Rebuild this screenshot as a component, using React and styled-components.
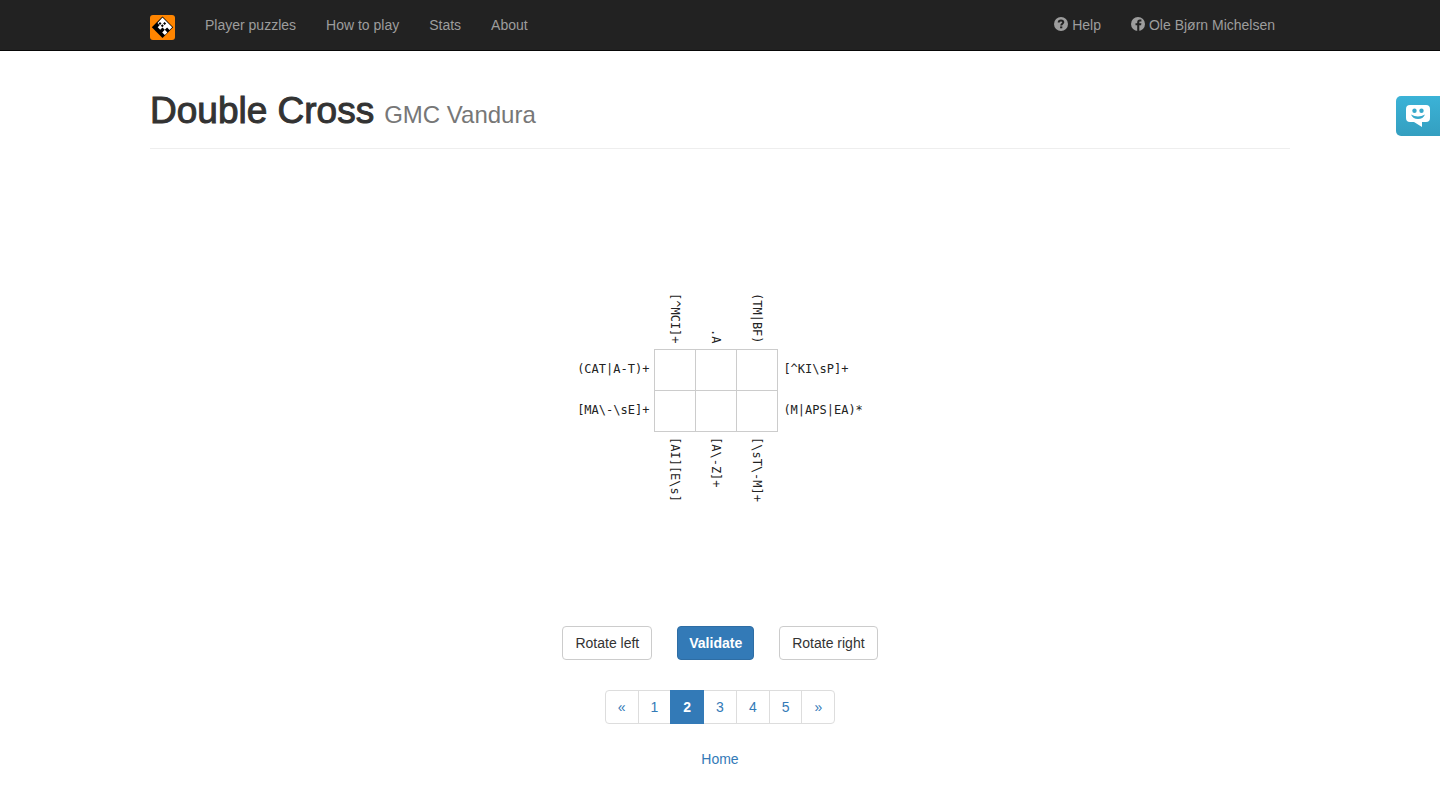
import React, { useState } from "react";
import styled, { createGlobalStyle, css } from "styled-components";

const GlobalStyle = createGlobalStyle`
  *, *::before, *::after { box-sizing: border-box; }
  body {
    margin: 0;
    background: #fff;
    color: #333;
    font: 14px/20px "Liberation Sans", Arial, sans-serif;
  }
`;

const Container = styled.div`
  max-width: 1170px;
  margin: 0 auto;
  padding: 0 15px;
`;

const Navbar = styled.nav`
  background: #222;
  border-bottom: 1px solid #080808;
`;

const NavInner = styled(Container)`
  display: flex;
  align-items: center;
  justify-content: space-between;
`;

const NavGroup = styled.div`
  display: flex;
`;

const Brand = styled.a`
  display: block;
  padding: 15px 15px 0 0;
  height: 50px;
  svg { display: block; }
`;

const NavLink = styled.a`
  display: flex;
  align-items: center;
  gap: 4px;
  padding: 15px;
  color: #9d9d9d;
  text-decoration: none;
  svg { margin-bottom: 2px; }
  &:hover { color: #fff; }
`;

const PageHeader = styled.header`
  display: flex;
  align-items: baseline;
  gap: 10px;
  margin-top: 40px;
  padding-bottom: 17px;
  border-bottom: 1px solid #eee;
`;

const Title = styled.h1`
  margin: 0;
  font-size: 37px;
  line-height: 40px;
  font-weight: 400;
  -webkit-text-stroke: 1px currentColor;
`;

const Author = styled.small`
  font-size: 24px;
  color: #777;
`;

const Puzzle = styled.form`
  display: flex;
  flex-direction: column;
  align-items: center;
  padding-top: 144px;
`;

const Board = styled.table`
  border-collapse: collapse;
  color: #222;
  font-family: "DejaVu Sans Mono", monospace;
  font-size: 12px;
  line-height: 20px;
`;

const RowClue = styled.th`
  padding: 0 5px 2px;
  font-weight: 400;
  text-align: ${(p) => (p.$side === "left" ? "right" : "left")};
  padding-${(p) => p.$side}: 0;
`;

const ColumnClue = styled.th`
  padding: 5px 0;
  font-weight: 400;
  vertical-align: ${(p) => (p.$side === "top" ? "bottom" : "top")};
  padding-${(p) => p.$side}: 0;
  span {
    display: block;
    width: fit-content;
    margin: 0 auto;
    writing-mode: vertical-rl;
  }
`;

const Cell = styled.td`
  padding: 0;
  border: 1px solid #ccc;
`;

const CellInput = styled.input`
  display: block;
  width: 40px;
  height: 40px;
  padding: 0;
  border: 0;
  background: transparent;
  font: inherit;
  font-size: 20px;
  text-align: center;
  text-transform: uppercase;
`;

const Actions = styled.div`
  display: flex;
  gap: 25px;
  margin-top: 124px;
`;

const Button = styled.button`
  padding: 6px 12px;
  border: 1px solid #ccc;
  border-radius: 4px;
  background: #fff;
  color: #333;
  font: inherit;
  cursor: pointer;
  ${(p) => p.$primary && css`
    padding: 6px 11px;
    background: #337ab7;
    border-color: #2e6da4;
    color: #fff;
    font-weight: 700;
  `}
`;

const Pagination = styled.ul`
  display: flex;
  justify-content: center;
  margin: 30px 0 25px;
  padding: 0;
  list-style: none;
`;

const PageLink = styled.a`
  display: block;
  margin-left: -1px;
  padding: 6px 12px;
  border: 1px solid #ddd;
  color: #337ab7;
  text-decoration: none;
  li:first-child > & { margin-left: 0; border-radius: 4px 0 0 4px; }
  li:last-child > & { border-radius: 0 4px 4px 0; }
  &[aria-current] {
    position: relative;
    background: #337ab7;
    border-color: #337ab7;
    color: #fff;
    font-weight: 700;
  }
`;

const HomeLink = styled.a`
  display: block;
  width: max-content;
  margin: 0 auto;
  color: #337ab7;
  text-decoration: none;
`;

const FeedbackButton = styled.button`
  position: fixed;
  top: 96px;
  right: 0;
  width: 44px;
  height: 40px;
  padding: 0;
  display: grid;
  place-items: center;
  border: 0;
  border-radius: 5px 0 0 5px;
  background: linear-gradient(#3bb3d7, #349fc0);
  cursor: pointer;
`;

const Logo = () => (
  <svg width="25" height="25" viewBox="0 0 25 25" aria-hidden="true">
    <rect width="25" height="25" rx="3" fill="#ff8500" />
    <path d="M12.5 1.5 23.2 12.2 12.5 23 1.8 12.2z" fill="#000" />
    <path
      fill="#fff"
      d="M12.5 2.5 22.2 12.2 19.5 14.9 17.1 12.5 14.8 14.8 12.5 12.5 10.2 14.8 7.7 12.3 9.6 10.2 7.5 8.1z
         M14.8 14.8 17.4 17.4 14.8 20 12.2 17.4z"
    />
    <path
      fill="#000"
      d="M10 7l1.500 1.500-1.500 1.500-1.500-1.500zM14.600 7l1.500 1.500-1.500 1.500-1.500-1.500zM12.300 9.300l1.500 1.500-1.500 1.500-1.500-1.500z"
    />
  </svg>
);

const HelpIcon = () => (
  <svg width="14" height="14" viewBox="0 0 14 14" aria-hidden="true">
    <circle cx="7" cy="7" r="7" fill="currentColor" />
    <path d="M4.7 5.6C4.7 4 5.8 3.4 7 3.4s2.3.7 2.3 1.9C9.3 6.7 7.2 6.8 7.2 8.6" fill="none" stroke="#222" strokeWidth="2" />
    <path d="M6.1 9.4h2.2v1.9H6.1z" fill="#222" />
  </svg>
);

const FacebookIcon = () => (
  <svg width="14" height="14" viewBox="0 0 14 14" aria-hidden="true">
    <circle cx="7" cy="7" r="7" fill="currentColor" />
    <path d="M6.2 13.9V8.2H4.5V6.3h1.7V5.2C6.2 3.4 7.2 2.6 8.7 2.6h1.7v1.9H9.2c-.7 0-.9.3-.9.9v.9h2.1l-.3 1.9H8.3v5.7z" fill="#222" />
  </svg>
);

const SmileIcon = () => (
  <svg width="26" height="24" viewBox="0 0 26 24" aria-hidden="true">
    <path d="M5 1h16a4 4 0 0 1 4 4v9a4 4 0 0 1-4 4h-4v5l-8-5H5a4 4 0 0 1-4-4V5a4 4 0 0 1 4-4z" fill="#fff" />
    <circle cx="9.5" cy="6.7" r="2.2" fill="#37a9cb" />
    <circle cx="16.5" cy="6.7" r="2.2" fill="#37a9cb" />
    <path d="M6 10.500Q13 14.500 20 10.500Q18 15 13 15T6 10.500z" fill="#37a9cb" />
  </svg>
);

const topClues = ["[^MCI]+", ".A", "(TM|BF)"];
const bottomClues = ["[AI][E\\s]", "[A\\-Z]+", "[\\sT\\-M]+"];
const rows = [
  { left: "(CAT|A-T)+", right: "[^KI\\sP]+" },
  { left: "[MA\\-\\sE]+", right: "(M|APS|EA)*" },
];
const pages = ["«", "1", "2", "3", "4", "5", "»"];

function ClueRow({ clues, side }) {
  return (
    <tr>
      <td />
      {clues.map((clue) => (
        <ColumnClue key={clue} scope="col" $side={side}>
          <span>{clue}</span>
        </ColumnClue>
      ))}
      <td />
    </tr>
  );
}

export default function App() {
  const [letters, setLetters] = useState({});
  return (
    <>
      <GlobalStyle />
      <Navbar>
        <NavInner>
          <NavGroup>
            <Brand href="#" aria-label="Regex Crossword"><Logo /></Brand>
            <NavLink href="#">Player puzzles</NavLink>
            <NavLink href="#">How to play</NavLink>
            <NavLink href="#">Stats</NavLink>
            <NavLink href="#">About</NavLink>
          </NavGroup>
          <NavGroup>
            <NavLink href="#"><HelpIcon />Help</NavLink>
            <NavLink href="#"><FacebookIcon />Ole Bjørn Michelsen</NavLink>
          </NavGroup>
        </NavInner>
      </Navbar>
      <Container as="main">
        <PageHeader>
          <Title>Double Cross</Title>
          <Author>GMC Vandura</Author>
        </PageHeader>
        <Puzzle onSubmit={(e) => e.preventDefault()}>
          <Board>
            <tbody>
              <ClueRow clues={topClues} side="top" />
              {rows.map((row, r) => (
                <tr key={row.left}>
                  <RowClue scope="row" $side="left">{row.left}</RowClue>
                  {topClues.map((_, c) => {
                    const id = `${r}-${c}`;
                    return (
                      <Cell key={id}>
                        <CellInput
                          aria-label={`Row ${r + 1}, column ${c + 1}`}
                          maxLength={1}
                          value={letters[id] || ""}
                          onChange={(e) => setLetters({ ...letters, [id]: e.target.value })}
                        />
                      </Cell>
                    );
                  })}
                  <RowClue $side="right">{row.right}</RowClue>
                </tr>
              ))}
              <ClueRow clues={bottomClues} side="bottom" />
            </tbody>
          </Board>
          <Actions>
            <Button type="button">Rotate left</Button>
            <Button type="submit" $primary>Validate</Button>
            <Button type="button">Rotate right</Button>
          </Actions>
        </Puzzle>
        <nav aria-label="Puzzles">
          <Pagination>
            {pages.map((page) => (
              <li key={page}>
                <PageLink href="#" aria-current={page === "2" ? "page" : undefined}>{page}</PageLink>
              </li>
            ))}
          </Pagination>
        </nav>
        <HomeLink href="#">Home</HomeLink>
      </Container>
      <FeedbackButton type="button" aria-label="Feedback"><SmileIcon /></FeedbackButton>
    </>
  );
}
